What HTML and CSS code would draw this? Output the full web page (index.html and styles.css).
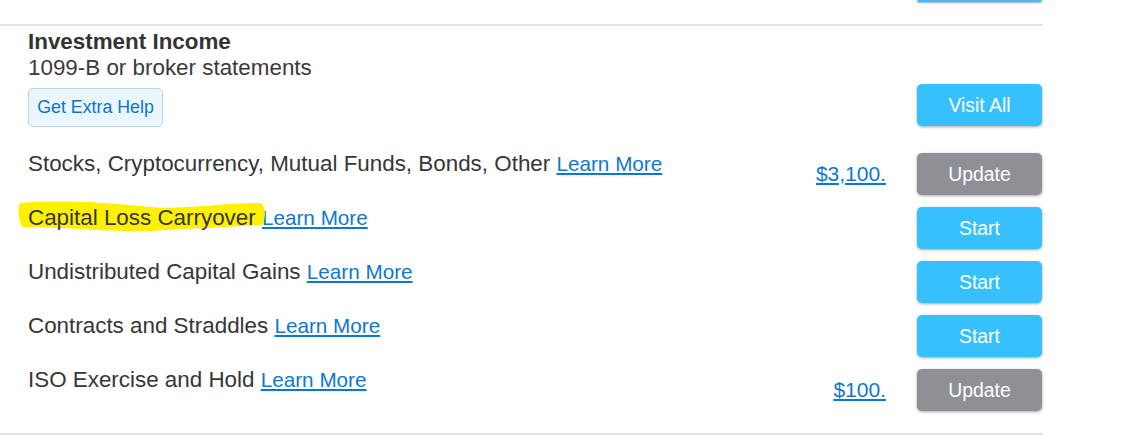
FILE: index.html
```html
<!DOCTYPE html>
<html lang="en">
<head>
<meta charset="utf-8">
<title>Investment Income</title>
<link rel="stylesheet" href="styles.css">
</head>
<body>
<div class="page">
  <div class="prev-tail"><div class="prev-btn"></div></div>
  <section class="section">
    <div class="header">
      <div class="header-text">
        <h2 class="title">Investment Income</h2>
        <p class="subtitle">1099-B or broker statements</p>
        <button class="help-btn">Get Extra Help</button>
      </div>
      <button class="btn btn-blue btn-visit">Visit All</button>
    </div>
    <ul class="rows">
      <li class="row">
        <span class="label">Stocks, Cryptocurrency, Mutual Funds, Bonds, Other <a class="link" href="#">Learn More</a></span>
        <a class="amount" href="#">$3,100.</a>
        <button class="btn btn-gray">Update</button>
      </li>
      <li class="row">
        <span class="label"><span class="marked"><svg class="marker" width="250" height="36" viewBox="0 0 250 36" aria-hidden="true"><path d="M4 4 C40 1, 90 3, 134 8 C170 11, 210 3, 246 4 Q252 15, 246 26 C210 28, 170 30, 134 32 C90 33, 40 27, 6 28 Q0 16, 4 4 Z" fill="#fdf000"/></svg>Capital Loss Carryover</span> <a class="link" href="#">Learn More</a></span>
        <button class="btn btn-blue">Start</button>
      </li>
      <li class="row">
        <span class="label">Undistributed Capital Gains <a class="link" href="#">Learn More</a></span>
        <button class="btn btn-blue">Start</button>
      </li>
      <li class="row">
        <span class="label">Contracts and Straddles <a class="link" href="#">Learn More</a></span>
        <button class="btn btn-blue">Start</button>
      </li>
      <li class="row">
        <span class="label">ISO Exercise and Hold <a class="link" href="#">Learn More</a></span>
        <a class="amount" href="#">$100.</a>
        <button class="btn btn-gray">Update</button>
      </li>
    </ul>
  </section>
</div>
</body>
</html>
```

FILE: styles.css
```css
* {
  box-sizing: border-box;
}

html, body {
  margin: 0;
  padding: 0;
  background: #ffffff;
}

body {
  font-family: "Liberation Sans", Arial, sans-serif;
  color: #363636;
}

.page {
  width: 1043px;
}

.prev-tail {
  height: 24px;
  display: flex;
  justify-content: flex-end;
  padding-right: 1px;
}

.prev-btn {
  width: 125px;
  height: 2px;
  background: #36c1fe;
  border-radius: 0 0 4px 4px;
  box-shadow: 0 1px 2px rgba(0, 0, 0, 0.35);
}

.section {
  border-top: 2px solid #e2e2e2;
  border-bottom: 2px solid #e2e2e2;
  padding: 3px 1px 22px 28px;
}

.header {
  display: flex;
  justify-content: space-between;
  align-items: flex-end;
}

.header-text {
  display: flex;
  flex-direction: column;
  align-items: flex-start;
}

.title {
  margin: 0;
  font-size: 22.4px;
  line-height: 26px;
  font-weight: bold;
  color: #333333;
}

.subtitle {
  margin: 0;
  font-size: 22.4px;
  line-height: 26px;
  color: #3a3a3a;
}

.help-btn {
  margin-top: 7px;
  height: 39px;
  width: 135px;
  padding: 0;
  font-family: "Liberation Sans", Arial, sans-serif;
  font-size: 17.8px;
  color: #0b76c8;
  background: #e9f6fd;
  border: 1px solid #bcd6e4;
  border-radius: 5px;
}

.btn {
  width: 125px;
  height: 42px;
  padding: 0;
  border: none;
  border-radius: 5px;
  font-family: "Liberation Sans", Arial, sans-serif;
  font-size: 19.4px;
  color: #ffffff;
  box-shadow: 0 1px 3px rgba(0, 0, 0, 0.35);
  flex: none;
}

.btn-blue {
  background: #36c1fe;
}

.btn-gray {
  background: #8e9096;
}

.btn-visit {
  margin-bottom: 1px;
}

.rows {
  list-style: none;
  margin: 26px 0 0;
  padding: 0;
  display: flex;
  flex-direction: column;
  gap: 12px;
}

.row {
  display: flex;
  align-items: flex-start;
  min-height: 42px;
}

.label {
  flex: 1;
  font-size: 22.4px;
  line-height: 22px;
  color: #363636;
}

.marked {
  position: relative;
  z-index: 0;
}

.marker {
  position: absolute;
  left: -12px;
  top: -6px;
  z-index: -1;
}

.link {
  font-size: 20.7px;
  color: #0d78d2;
  text-decoration: underline;
}

.amount {
  align-self: center;
  margin-right: 31px;
  font-size: 21px;
  line-height: 24px;
  color: #0d78d2;
  text-decoration: underline;
}
```
